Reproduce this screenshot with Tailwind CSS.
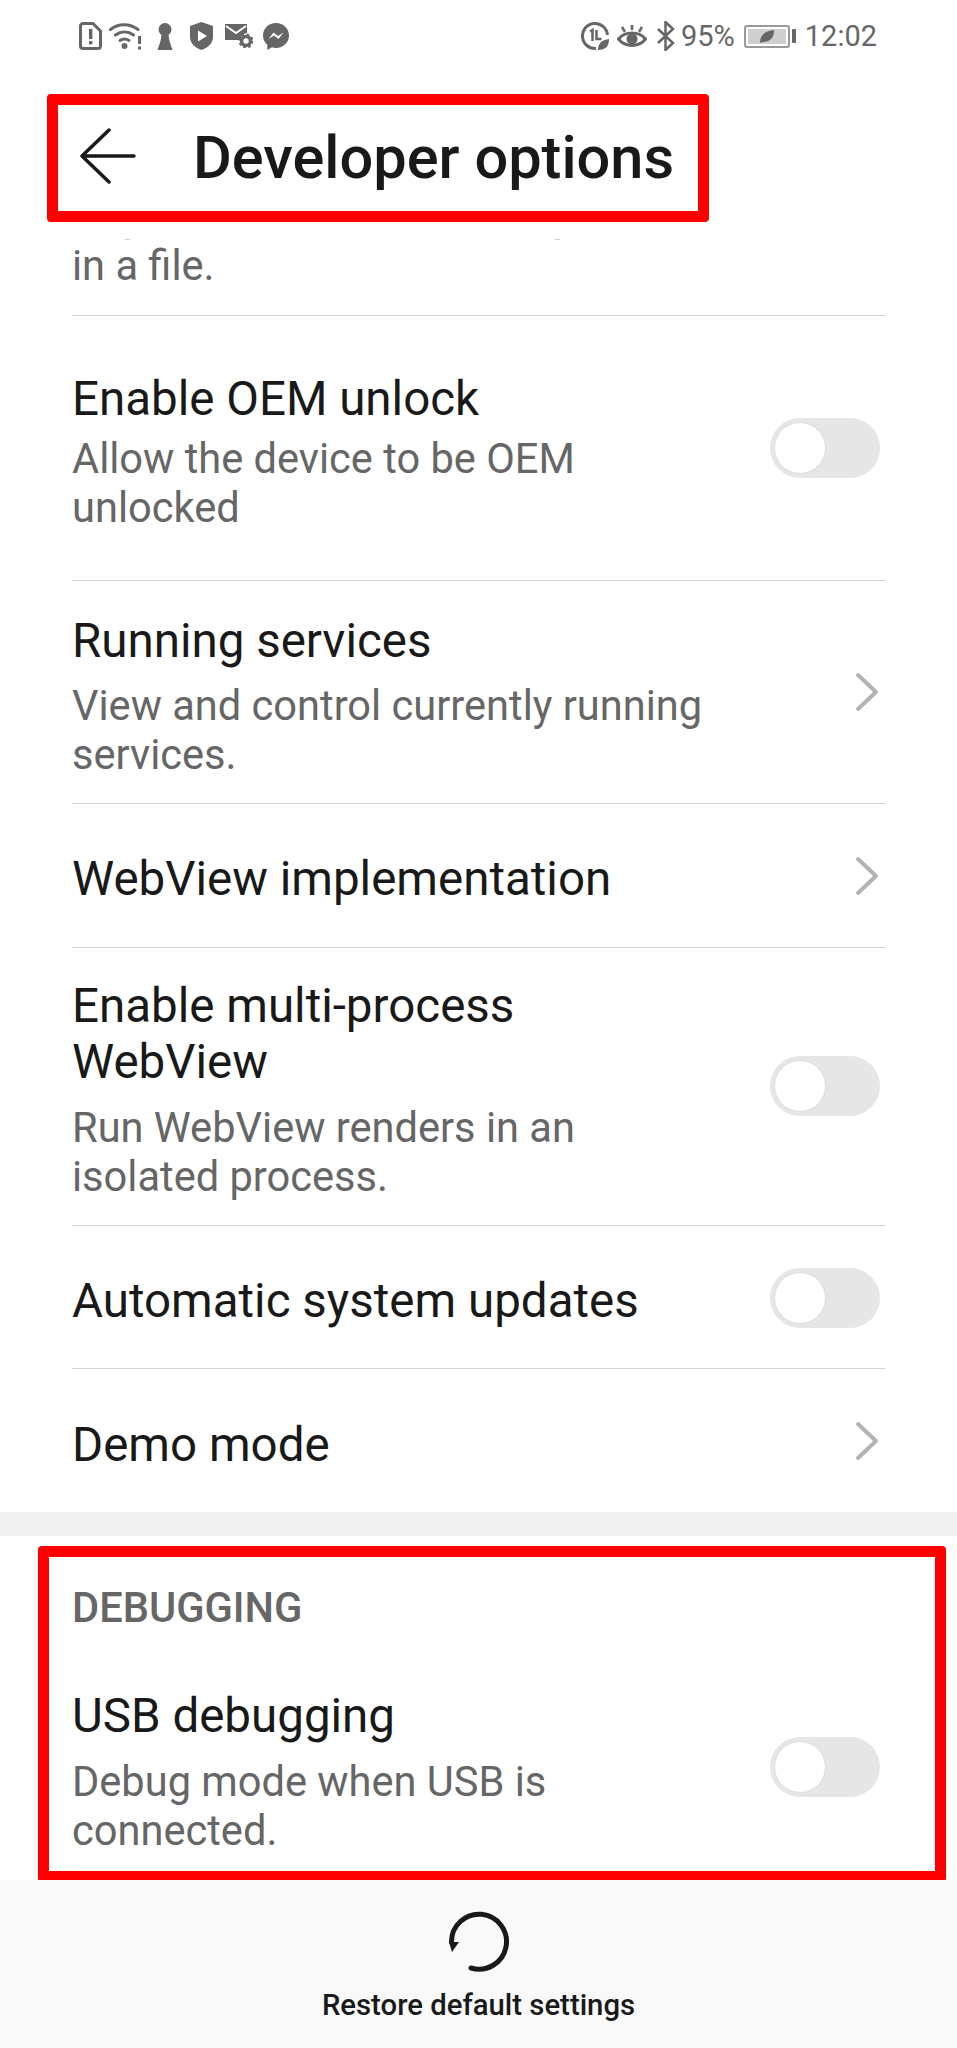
<!DOCTYPE html>
<html lang="en">
<head>
    <meta charset="UTF-8">
    <title>Developer options</title>
    <script src="https://cdn.jsdelivr.net/npm/@tailwindcss/browser@4"></script>
</head>
<body class="bg-white font-['Roboto',sans-serif] text-[#191919] w-[957px] h-[2048px] overflow-hidden flex flex-col">

    <!-- Status bar -->
    <div class="h-[72px] flex items-center justify-between pl-[79px] pr-[80px] text-[#666666]">
        <div class="flex items-center">
            <svg class="w-[23px] h-[28px]" viewBox="0 0 23 28"><path d="M4 1.5h10l7.5 7.5v15a2.5 2.5 0 0 1-2.5 2.5H4A2.5 2.5 0 0 1 1.5 24V4A2.5 2.5 0 0 1 4 1.5z" fill="none" stroke="#666" stroke-width="3"/><rect x="10" y="7" width="3.4" height="10" fill="#666"/><rect x="10" y="19" width="3.4" height="3.4" fill="#666"/></svg>
            <svg class="w-[33px] h-[28px] ml-[7px]" viewBox="0 0 33 28"><g fill="none" stroke="#666" stroke-width="3" stroke-linecap="round"><path d="M1.5 7.5C9 1 21 1 29 7.5"/><path d="M6.5 13C12 9 19 9 24.5 13"/><path d="M11 18.500c3-2 6-2 9 0"/></g><circle cx="15.500" cy="24" r="3" fill="#666"/><rect x="29" y="14" width="3" height="8" fill="#666"/><rect x="29" y="24.500" width="3" height="3" fill="#666"/></svg>
            <svg class="w-[16px] h-[27px] ml-[15px]" viewBox="0 0 16 27"><circle cx="8" cy="6.500" r="6.500" fill="#666"/><path d="M5 9h6l1.500 9 3 9H.5l3-9z" fill="#666"/></svg>
            <svg class="w-[23px] h-[28px] ml-[17px]" viewBox="0 0 23 28"><path d="M11.500 0 23 4v11c0 6-5 11-11.500 13C5 26 0 21 0 15V4z" fill="#666"/><path d="M8 8.500 17 14l-9 5.500z" fill="#fff"/></svg>
            <svg class="w-[28px] h-[24px] ml-[12px]" viewBox="0 0 28 24"><path d="M0 0h22v9a7 7 0 0 0-6.500 7H0z" fill="#666"/><path d="M1 2l10 7 10-7" fill="none" stroke="#fff" stroke-width="2"/><circle cx="21" cy="17" r="4.500" fill="none" stroke="#666" stroke-width="3.500"/><circle cx="21" cy="17" r="6.500" fill="none" stroke="#666" stroke-width="2" stroke-dasharray="2.500 2.600"/></svg>
            <svg class="w-[26px] h-[27px] ml-[10px]" viewBox="0 0 26 27"><path d="M13 0C5.800 0 0 5.400 0 12.500c0 3.800 1.600 7 4.300 9.200V27l4.700-2.700c1.300.4 2.600.6 4 .6 7.200 0 13-5.400 13-12.400S20.200 0 13 0z" fill="#666"/><path d="M5.500 16 10.500 9.500l4.500 3.500 5.500-3.500-5 6.500-4.500-3.500z" fill="#fff"/></svg>
        </div>
        <div class="flex items-center">
            <svg class="w-[28px] h-[28px]" viewBox="0 0 28 28"><path d="M15 26.400A12.500 12.500 0 1 1 26.400 13" fill="none" stroke="#666" stroke-width="3"/><path d="M9 9.500 11.500 8v11M15.500 8v9h5" fill="none" stroke="#666" stroke-width="2.500"/><path d="M17 28c0-7 4-10 11-11 0 7-3 11-11 11z" fill="#666"/></svg>
            <svg class="w-[30px] h-[25px] ml-[8px]" viewBox="0 0 30 25"><path d="M1.500 15C8 7 22 7 28.500 15 22 23.500 8 23.500 1.500 15z" fill="none" stroke="#666" stroke-width="3"/><circle cx="15" cy="15" r="5.500" fill="#666"/><path d="M15 1v5M5 3l3 5M25 3l-3 5" stroke="#666" stroke-width="2.500"/></svg>
            <svg class="w-[18px] h-[30px] ml-[10px]" viewBox="0 0 18 30"><path d="M1 8l15 14-7.500 7V1L16 8 1 22" fill="none" stroke="#666" stroke-width="2.500"/></svg>
            <span class="ml-[6px] text-[29px] leading-none">95%</span>
            <div class="ml-[9px] w-[46px] h-[23px] border-2 border-[#999999] rounded-[3px] p-[2px]">
                <div class="w-full h-full bg-[#cfcfcf] flex items-center justify-center">
                    <svg class="w-[14px] h-[13px]" viewBox="0 0 14 13"><path d="M0 13C0 5 5 1 14 0c0 8-4 12-11 12z" fill="#666"/></svg>
                </div>
            </div>
            <div class="ml-[2px] w-[4px] h-[14px] bg-[#666666] rounded-[1px]"></div>
            <span class="ml-[9px] text-[29px] leading-none">12:02</span>
        </div>
    </div>

    <!-- Header -->
    <div class="relative h-[149px] flex items-center pl-[80px] pt-[25px]">
        <svg class="w-[56px] h-[56px] mb-[7px]" viewBox="0 0 56 56"><path d="M54 28H2M29 2 2 28l27 26" fill="none" stroke="#191919" stroke-width="3.500" stroke-linecap="round" stroke-linejoin="round"/></svg>
        <h1 class="ml-[57px] text-[59.500px] font-medium leading-none">Developer options</h1>
        <div class="absolute left-[47px] top-[22px] w-[662px] h-[128px] border-[11px] border-[#ff0000] rounded-[4px]"></div>
    </div>

    <!-- Settings list -->
    <div class="flex-1 overflow-hidden">
        <div class="relative ml-[72px] w-[813px] h-[95px] border-b border-[#d4d4d4] text-[41.600px] leading-[49px] text-[#666666] pt-[20px]">
            in a file.
            <div class="absolute left-[53px] top-[18px] w-[5px] h-[1px] bg-[#cccccc]"></div>
            <div class="absolute left-[483px] top-[18px] w-[5px] h-[1px] bg-[#cccccc]"></div>
        </div>

        <div class="ml-[72px] w-[813px] h-[265px] border-b border-[#d4d4d4] flex items-center justify-between">
            <div class="w-[600px] mt-[6px]">
                <div class="text-[47.500px] leading-[56px]">Enable OEM unlock</div>
                <div class="text-[41.600px] leading-[49px] text-[#666666] mt-[7px]">Allow the device to be OEM unlocked</div>
            </div>
            <div class="w-[110px] h-[60px] rounded-full bg-[#e6e6e6] p-[4px] mr-[5px] mb-[1px]"><div class="w-[52px] h-[52px] rounded-full bg-white border border-[#dddddd]"></div></div>
        </div>

        <div class="ml-[72px] w-[813px] h-[223px] border-b border-[#d4d4d4] flex items-center justify-between">
            <div class="w-[680px] mt-[8px]">
                <div class="text-[47.500px] leading-[56px]">Running services</div>
                <div class="text-[41.600px] leading-[49px] text-[#666666] mt-[12px]">View and control currently running services.</div>
            </div>
            <svg class="w-[24px] h-[40px] mr-[6px]" viewBox="0 0 24 40"><path d="M3 3l18 17L3 37" fill="none" stroke="#b3b3b3" stroke-width="4" stroke-linecap="round" stroke-linejoin="round"/></svg>
        </div>

        <div class="ml-[72px] w-[813px] h-[144px] border-b border-[#d4d4d4] flex items-center justify-between">
            <div class="text-[47.500px] leading-[56px] mt-[6px]">WebView implementation</div>
            <svg class="w-[24px] h-[40px] mr-[6px]" viewBox="0 0 24 40"><path d="M3 3l18 17L3 37" fill="none" stroke="#b3b3b3" stroke-width="4" stroke-linecap="round" stroke-linejoin="round"/></svg>
        </div>

        <div class="ml-[72px] w-[813px] h-[278px] border-b border-[#d4d4d4] flex items-center justify-between">
            <div class="w-[600px] mt-[6px]">
                <div class="text-[47.500px] leading-[56px]">Enable multi-process WebView</div>
                <div class="text-[41.600px] leading-[49px] text-[#666666] mt-[13px]">Run WebView renders in an isolated process.</div>
            </div>
            <div class="w-[110px] h-[60px] rounded-full bg-[#e6e6e6] p-[4px] mr-[5px] mb-[1px]"><div class="w-[52px] h-[52px] rounded-full bg-white border border-[#dddddd]"></div></div>
        </div>

        <div class="ml-[72px] w-[813px] h-[143px] border-b border-[#d4d4d4] flex items-center justify-between">
            <div class="text-[47.500px] leading-[56px] mt-[8px]">Automatic system updates</div>
            <div class="w-[110px] h-[60px] rounded-full bg-[#e6e6e6] p-[4px] mr-[5px] mt-[1px]"><div class="w-[52px] h-[52px] rounded-full bg-white border border-[#dddddd]"></div></div>
        </div>

        <div class="ml-[72px] w-[813px] h-[143px] flex items-center justify-between">
            <div class="text-[47.500px] leading-[56px] mt-[9px]">Demo mode</div>
            <svg class="w-[24px] h-[40px] mr-[6px]" viewBox="0 0 24 40"><path d="M3 3l18 17L3 37" fill="none" stroke="#b3b3b3" stroke-width="4" stroke-linecap="round" stroke-linejoin="round"/></svg>
        </div>

        <div class="h-[24px] bg-[#f1f1f1]"></div>

        <!-- Debugging -->
        <div class="relative h-[343px] pl-[72px]">
            <div class="pt-[52px] text-[41.600px] leading-[40px] font-medium text-[#666666]">DEBUGGING</div>
            <div class="mt-[60px] flex items-center justify-between w-[813px]">
                <div class="w-[600px]">
                    <div class="text-[47.500px] leading-[56px]">USB debugging</div>
                    <div class="text-[41.600px] leading-[49px] text-[#666666] mt-[13px]">Debug mode when USB is connected.</div>
                </div>
                <div class="w-[110px] h-[60px] rounded-full bg-[#e6e6e6] p-[4px] mr-[5px] mb-[10px]"><div class="w-[52px] h-[52px] rounded-full bg-white border border-[#dddddd]"></div></div>
            </div>
            <div class="absolute left-[38px] top-[10px] w-[908px] h-[336px] border-[11px] border-[#ff0000] rounded-[4px]"></div>
        </div>
    </div>

    <!-- Footer -->
    <div class="h-[168px] bg-[#f9f9f9] flex flex-col items-center pt-[31px]">
        <svg class="w-[62px] h-[62px]" viewBox="0 0 62 62"><path d="M3.500 31A27.500 27.500 0 1 1 23 57" fill="none" stroke="#191919" stroke-width="5" stroke-linecap="round"/><path d="M1 31h10L4 41z" fill="#191919"/></svg>
        <div class="mt-[14px] text-[29.300px] leading-[36px] font-medium">Restore default settings</div>
    </div>
</body>
</html>
